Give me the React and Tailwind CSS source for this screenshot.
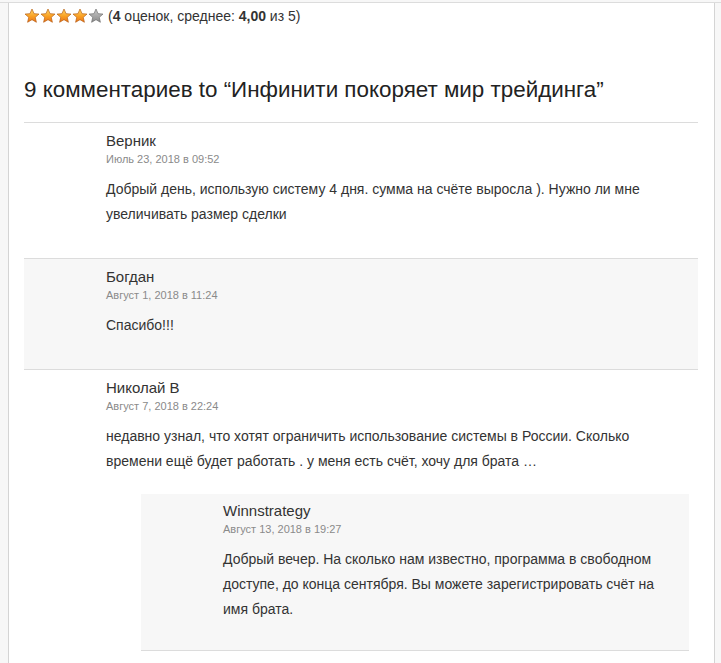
import React from "react";

const font = { fontFamily: '"Liberation Sans", Arial, sans-serif' };

function Star({ filled, id }) {
  return (
    <svg width="16" height="16" viewBox="0 0 24 24">
      <defs>
        <linearGradient id={id} x1="0" y1="0" x2="0" y2="1">
          {filled ? (
            <>
              <stop offset="0" stopColor="#ffd86a" />
              <stop offset="0.55" stopColor="#f9a023" />
              <stop offset="1" stopColor="#e9731a" />
            </>
          ) : (
            <>
              <stop offset="0" stopColor="#c8c8c8" />
              <stop offset="1" stopColor="#8a8a8a" />
            </>
          )}
        </linearGradient>
      </defs>
      <path
        d="M12 1.5l3.1 7 7.4.6-5.6 4.9 1.7 7.4L12 17.5l-6.6 3.9 1.7-7.4L1.5 9.1l7.4-.6z"
        fill={`url(#${id})`}
        stroke={filled ? "#b35a10" : "#6b6b6b"}
        strokeWidth="1"
        strokeLinejoin="round"
      />
    </svg>
  );
}

function Comment({ name, date, children, className = "" }) {
  return (
    <div className={className}>
      <div className="pl-[82px] pr-[28px] pt-[8px] pb-[31px]">
        <div className="text-[15px] leading-[20px] text-[#333]">{name}</div>
        <div className="text-[11px] leading-[16px] text-[#8a8a8a]">{date}</div>
        <div className="mt-[10px] text-[14px] leading-[25px] text-[#333]">{children}</div>
      </div>
    </div>
  );
}

export default function App() {
  return (
    <div style={font} className="min-h-[663px] bg-[#f7f7f7] pt-[2px]">
      <div className="border-t border-[#dcdcdc]">
        <div className="ml-[8px] w-[707px] min-h-[660px] border-l border-r border-[#d4d4d4] bg-white pl-[15px] pr-[16px] pt-[3px]">
          <div className="flex items-center h-[20px]">
            <div className="flex">
              <Star filled id="s1" />
              <Star filled id="s2" />
              <Star filled id="s3" />
              <Star filled id="s4" />
              <Star id="s5" />
            </div>
            <span className="ml-[4px] text-[14px] text-[#333]">
              (<b>4</b> оценок, среднее: <b>4,00</b> из 5)
            </span>
          </div>
          <h2 className="mt-[49px] text-[22.4px] leading-[30px] text-[#222] font-normal">
            9 комментариев to “Инфинити покоряет мир трейдинга”
          </h2>
          <div className="mt-[17px] border-t border-[#dcdcdc]">
            <Comment className="border-b border-[#dcdcdc]" name="Верник" date="Июль 23, 2018 в 09:52">
              Добрый день, использую систему 4 дня. сумма на счёте выросла ). Нужно ли мне увеличивать размер сделки
            </Comment>
            <Comment className="border-b border-[#dcdcdc] bg-[#f7f7f7]" name="Богдан" date="Август 1, 2018 в 11:24">
              Спасибо!!!
            </Comment>
            <div>
              <div className="pl-[82px] pr-[28px] pt-[8px] pb-[20px]">
                <div className="text-[15px] leading-[20px] text-[#333]">Николай В</div>
                <div className="text-[11px] leading-[16px] text-[#8a8a8a]">Август 7, 2018 в 22:24</div>
                <div className="mt-[10px] text-[14px] leading-[25px] text-[#333]">
                  недавно узнал, что хотят ограничить использование системы в России. Сколько времени ещё будет работать . у меня есть счёт, хочу для брата …
                </div>
              </div>
              <div className="ml-[117px] mr-[9px] bg-[#f7f7f7] border-b border-[#dcdcdc]">
                <div className="pl-[82px] pr-[20px] pt-[7px] pb-[28px]">
                  <div className="text-[15px] leading-[20px] text-[#333]">Winnstrategy</div>
                  <div className="text-[11px] leading-[16px] text-[#8a8a8a]">Август 13, 2018 в 19:27</div>
                  <div className="mt-[10px] text-[14px] leading-[25px] text-[#333]">
                    Добрый вечер. На сколько нам известно, программа в свободном доступе, до конца сентября. Вы можете зарегистрировать счёт на имя брата.
                  </div>
                </div>
              </div>
            </div>
          </div>
        </div>
      </div>
    </div>
  );
}
